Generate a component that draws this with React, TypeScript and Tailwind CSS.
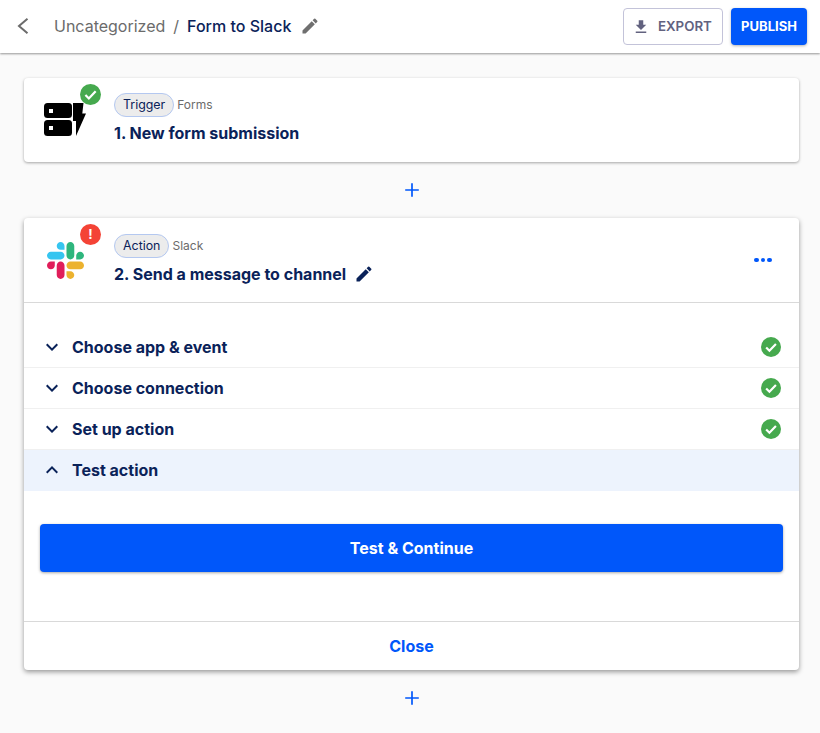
import React from "react";

const EditPath = "M3 17.25V21h3.75L17.81 9.94l-3.75-3.75L3 17.25zM20.71 7.04a.996.996 0 0 0 0-1.41l-2.34-2.34a.996.996 0 0 0-1.41 0l-1.83 1.83 3.75 3.75 1.83-1.83z";

function Edit({ className }: { className: string }) {
  return (
    <svg viewBox="0 0 24 24" className={className} fill="currentColor">
      <path d={EditPath} />
    </svg>
  );
}

function GreenCheck({ className }: { className: string }) {
  return (
    <svg viewBox="0 0 24 24" className={className}>
      <circle cx="12" cy="12" r="12" fill="#46a94e" />
      <path d="M6.2 12.6l3.9 3.9 7.8-8.2" fill="none" stroke="#fff" strokeWidth="2.6" />
    </svg>
  );
}

function Chevron({ up }: { up?: boolean }) {
  return (
    <svg viewBox="0 0 24 24" className="w-6 h-6 text-[#0a2259]" fill="currentColor">
      {up ? (
        <path d="M7.41 15.41 12 10.83l4.59 4.58L18 14l-6-6-6 6z" />
      ) : (
        <path d="M7.41 8.59 12 13.17l4.59-4.58L18 10l-6 6-6-6z" />
      )}
    </svg>
  );
}

function Plus() {
  return (
    <div className="h-14 flex items-center justify-center text-[#0057fa]">
      <svg viewBox="0 0 16 16" className="w-4 h-4" fill="none" stroke="currentColor" strokeWidth="1.7">
        <path d="M8 1.2v13.6M1.2 8h13.6" />
      </svg>
    </div>
  );
}

function FormsIcon() {
  return (
    <svg viewBox="0 0 44 36" className="w-[44px] h-[36px]">
      <rect x="0" y="1" width="28" height="15" rx="3.5" fill="#000" />
      <rect x="0" y="18" width="28" height="16" rx="3.5" fill="#000" />
      <rect x="5" y="7" width="4" height="4" fill="#fff" />
      <rect x="5" y="24" width="4" height="4" fill="#fff" />
      <path d="M29 1h10.5l-1.2 10.5H42L32 34V19h-3z" fill="#000" />
    </svg>
  );
}

function SlackLogo() {
  return (
    <svg viewBox="0 0 122.8 122.8" className="w-[37px] h-[37px]">
      <path fill="#e01e5a" d="M25.8 77.6c0 7.1-5.8 12.9-12.9 12.9S0 84.7 0 77.6s5.8-12.9 12.9-12.9h12.9v12.9zM32.3 77.6c0-7.1 5.8-12.9 12.9-12.9s12.9 5.8 12.9 12.9v32.3c0 7.1-5.8 12.9-12.9 12.9s-12.9-5.8-12.9-12.9V77.6z" />
      <path fill="#36c5f0" d="M45.2 25.8c-7.1 0-12.9-5.8-12.9-12.9S38.1 0 45.2 0s12.9 5.8 12.9 12.9v12.9H45.2zM45.2 32.3c7.1 0 12.9 5.8 12.9 12.9s-5.8 12.9-12.9 12.9H12.9C5.8 58.1 0 52.3 0 45.2s5.8-12.9 12.9-12.9h32.3z" />
      <path fill="#2eb67d" d="M97 45.2c0-7.1 5.8-12.9 12.9-12.9s12.9 5.8 12.9 12.9-5.8 12.9-12.9 12.9H97V45.2zM90.5 45.2c0 7.1-5.8 12.9-12.9 12.9s-12.9-5.8-12.9-12.9V12.9C64.7 5.8 70.5 0 77.6 0s12.9 5.8 12.9 12.9v32.3z" />
      <path fill="#ecb22e" d="M77.6 97c7.1 0 12.9 5.8 12.9 12.9s-5.8 12.9-12.9 12.9-12.9-5.8-12.9-12.9V97h12.9zM77.6 90.5c-7.1 0-12.9-5.8-12.9-12.9s5.8-12.9 12.9-12.9h32.3c7.1 0 12.9 5.8 12.9 12.9s-5.8 12.9-12.9 12.9H77.6z" />
    </svg>
  );
}

function Chip({ label }: { label: string }) {
  return (
    <span className="h-6 px-2 flex items-center rounded-full border border-[#b4c8f0] bg-[#ececec] text-[12.4px] text-[#0a2259]">
      {label}
    </span>
  );
}

function Row({ label, done, open }: { label: string; done?: boolean; open?: boolean }) {
  return (
    <div className={`h-[41px] flex items-center pl-4 pr-[18px] border-b ${open ? "bg-[#edf3fd] border-transparent" : "border-[#f0f0f0]"}`}>
      <Chevron up={open} />
      <span className="ml-2 flex-1 text-base font-bold text-[#0a2259]">{label}</span>
      {done && <GreenCheck className="w-5 h-5" />}
    </div>
  );
}

export default function App() {
  return (
    <div className="w-[820px] h-[733px] overflow-hidden bg-[#fafafa] font-['Inter',sans-serif]">
      <header className="h-[53px] bg-white shadow-[0_1px_2px_rgba(0,0,0,0.4)] flex items-center pr-[13px] relative">
        <svg viewBox="0 0 12 16" className="w-[12px] h-[16px] ml-[17px] mb-[1px] text-[#6b6b6b]" fill="none" stroke="currentColor" strokeWidth="2">
          <path d="M10.5 0.8 2 8l8.5 7.2" />
        </svg>
        <span className="ml-[25px] mb-[1px] text-base text-[#6b6b6b]">Uncategorized</span>
        <span className="ml-2 mb-[1px] text-base text-[#6b6b6b]">/</span>
        <span className="ml-2 mb-[1px] text-base font-medium text-[#0a2259]">Form to Slack</span>
        <Edit className="w-5 h-5 ml-[9px] mb-[1px] text-[#6f6f6f]" />
        <div className="flex-1" />
        <button className="w-[100px] h-[37px] rounded border border-[#c3c3d9] flex items-center justify-start pl-2 gap-2 text-[13.3px] font-semibold text-[#62627f] bg-white">
          <svg viewBox="0 0 24 24" className="w-[18px] h-[18px]" fill="currentColor">
            <path d="M19 9h-4V3H9v6H5l7 7 7-7zM5 18v2h14v-2H5z" />
          </svg>
          EXPORT
        </button>
        <button className="ml-2 w-[76px] h-[37px] rounded bg-[#0057fa] text-[13px] font-bold text-white shadow-[0_1px_3px_rgba(0,0,0,0.3)]">
          PUBLISH
        </button>
      </header>

      <main className="pt-[25px] pl-6 pr-[21px]">
        <section className="h-[84px] bg-white rounded shadow-[0_1px_3px_rgba(0,0,0,0.35)] flex">
          <div className="w-[90px] shrink-0 pl-5 pt-[24px] relative">
            <FormsIcon />
            <div className="absolute left-[56px] top-[6px] w-[21px] h-[21px] rounded-full bg-white flex items-center justify-center">
              <GreenCheck className="w-[21px] h-[21px]" />
            </div>
          </div>
          <div className="pt-[15px]">
            <div className="flex items-center gap-[3px]">
              <Chip label="Trigger" />
              <span className="text-xs text-[#6b6b6b]">Forms</span>
            </div>
            <div className="mt-[4px] text-base font-bold text-[#0a2259]">1. New form submission</div>
          </div>
        </section>

        <Plus />

        <section className="h-[452px] bg-white rounded shadow-[0_2px_5px_rgba(0,0,0,0.4)] flex flex-col">
          <div className="h-[85px] shrink-0 border-b border-[#d9d9d9] flex">
            <div className="w-[90px] shrink-0 pl-[23px] pt-[24px] relative">
              <SlackLogo />
              <div className="absolute left-[56px] top-[6px] w-[21px] h-[21px] rounded-full bg-[#f44336] flex items-center justify-center text-white text-[13px] font-bold">
                !
              </div>
            </div>
            <div className="pt-[16px] flex-1">
              <div className="flex items-center gap-[3px]">
                <Chip label="Action" />
                <span className="text-xs text-[#6b6b6b]">Slack</span>
              </div>
              <div className="mt-[4px] flex items-center text-base font-bold text-[#0a2259]">
                2. Send a message to channel
                <Edit className="w-5 h-5 ml-2 text-[#0a2259]" />
              </div>
            </div>
            <div className="w-[45px] shrink-0 flex items-center justify-start gap-[2px]">
              <span className="w-[4.5px] h-[4.5px] rounded-full bg-[#0057fa]" />
              <span className="w-[4.5px] h-[4.5px] rounded-full bg-[#0057fa]" />
              <span className="w-[4.5px] h-[4.5px] rounded-full bg-[#0057fa]" />
            </div>
          </div>

          <div className="pt-6">
            <Row label="Choose app & event" done />
            <Row label="Choose connection" done />
            <Row label="Set up action" done />
            <Row label="Test action" open />
          </div>

          <div className="flex-1 px-4 pt-[33px] border-b border-[#d9d9d9]">
            <button className="w-full h-12 rounded bg-[#0057fa] text-base font-bold text-white shadow-[0_1px_3px_rgba(0,0,0,0.35)]">
              Test &amp; Continue
            </button>
          </div>

          <div className="h-12 shrink-0 pb-[1px] flex items-center justify-center text-base font-bold text-[#0057fa]">Close</div>
        </section>

        <Plus />
      </main>
    </div>
  );
}
